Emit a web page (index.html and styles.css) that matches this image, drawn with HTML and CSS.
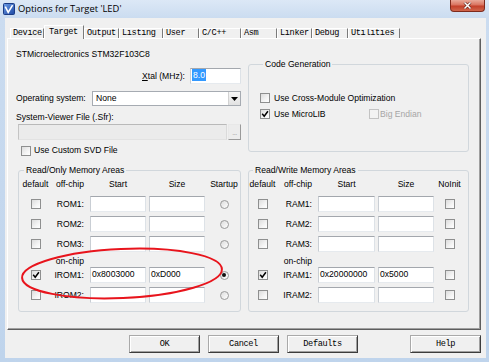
FILE: index.html
```html
<!DOCTYPE html>
<html>
<head>
<meta charset="utf-8">
<title>Options for Target 'LED'</title>
<link rel="stylesheet" href="styles.css">
</head>
<body>
<div class="window">
  <div class="titlebar">
    <svg class="app-icon" viewBox="0 0 12 12" width="12" height="12">
      <defs>
        <linearGradient id="ig" x1="0" y1="0" x2="1" y2="1">
          <stop offset="0" stop-color="#6d9de6"/>
          <stop offset="1" stop-color="#1c47a3"/>
        </linearGradient>
      </defs>
      <rect x="0.5" y="0.5" width="11" height="11" rx="1" fill="url(#ig)" stroke="#1b3c85"/>
      <path d="M2.3 3.6 L5.2 9.4 L9.6 2.2" stroke="#fff" stroke-width="1.6" fill="none"/>
    </svg>
    <span class="title">Options for Target 'LED'</span>
    <div class="close-btn">
      <svg width="9" height="7" viewBox="0 0 9 7"><path d="M1.5 0.5 L7.5 6.5 M7.5 0.5 L1.5 6.5" stroke="#5a1a10" stroke-width="2.6"/><path d="M1.5 0.5 L7.5 6.5 M7.5 0.5 L1.5 6.5" stroke="#fff" stroke-width="1.5"/></svg>
    </div>
  </div>

  <div class="client">
    <div class="tabs">
      <div class="tab">Device</div>
      <div class="tab active">Target</div>
      <div class="tab">Output</div>
      <div class="tab">Listing</div>
      <div class="tab">User</div>
      <div class="tab">C/C++</div>
      <div class="tab">Asm</div>
      <div class="tab">Linker</div>
      <div class="tab">Debug</div>
      <div class="tab">Utilities</div>
    </div>

    <div class="panel">
      <div class="top">
        <div class="left-col">
          <div class="line device">STMicroelectronics STM32F103C8</div>
          <div class="xtal-row">
            <span class="line"><u>X</u>tal (MHz):</span>
            <div class="textbox xtal"><span class="selected">8.0</span></div>
          </div>
          <div class="os-row">
            <span class="line os-label">Operating system:</span>
            <div class="combo">
              <span class="combo-text">None</span>
              <span class="combo-btn"><svg width="7" height="4" viewBox="0 0 7 4"><path d="M0 0H7L3.5 4Z" fill="#000"/></svg></span>
            </div>
          </div>
          <div class="line svf-label">System-Viewer File (.Sfr):</div>
          <div class="svf-row">
            <div class="textbox disabled"></div>
            <div class="browse">...</div>
          </div>
          <div class="check-row">
            <span class="cb"></span>
            <span class="line">Use Custom SVD File</span>
          </div>
        </div>

        <fieldset class="group codegen">
          <legend>Code Generation</legend>
          <div class="cg-row">
            <span class="cb"></span>
            <span class="line">Use Cross-Module Optimization</span>
          </div>
          <div class="cg-row second">
            <span class="cg-item">
              <span class="cb"><svg viewBox="0 0 8 8" width="8" height="8"><path d="M1.2 3.8 L3.2 6.2 L6.9 1.2" stroke="#000" stroke-width="1.5" fill="none"/></svg></span>
              <span class="line">Use MicroLIB</span>
            </span>
            <span class="cb disabled"></span>
            <span class="line muted">Big Endian</span>
          </div>
        </fieldset>
      </div>

      <div class="mem">
        <fieldset class="group ro">
          <legend>Read/Only Memory Areas</legend>
          <div class="mem-grid ro-grid">
            <span class="h">default</span><span class="h r">off-chip</span><span class="h">Start</span><span class="h">Size</span><span class="h">Startup</span>

            <span class="cc"><span class="cb"></span></span><span class="lbl">ROM1:</span><span class="textbox"></span><span class="textbox"></span><span class="cc"><span class="radio"></span></span>
            <span class="cc"><span class="cb"></span></span><span class="lbl">ROM2:</span><span class="textbox"></span><span class="textbox"></span><span class="cc"><span class="radio"></span></span>
            <span class="cc"><span class="cb"></span></span><span class="lbl">ROM3:</span><span class="textbox"></span><span class="textbox"></span><span class="cc"><span class="radio"></span></span>

            <span></span><span class="onchip">on-chip</span><span></span><span></span><span></span>

            <span class="cc"><span class="cb"><svg viewBox="0 0 8 8" width="8" height="8"><path d="M1.2 3.8 L3.2 6.2 L6.9 1.2" stroke="#000" stroke-width="1.5" fill="none"/></svg></span></span><span class="lbl">IROM1:</span><span class="textbox">0x8003000</span><span class="textbox">0xD000</span><span class="cc"><span class="radio on"></span></span>
            <span class="cc"><span class="cb"></span></span><span class="lbl">IROM2:</span><span class="textbox"></span><span class="textbox"></span><span class="cc"><span class="radio"></span></span>
          </div>
        </fieldset>

        <fieldset class="group rw">
          <legend>Read/Write Memory Areas</legend>
          <div class="mem-grid rw-grid">
            <span class="h">default</span><span class="h r">off-chip</span><span class="h">Start</span><span class="h">Size</span><span class="h">NoInit</span>

            <span class="cc"><span class="cb"></span></span><span class="lbl">RAM1:</span><span class="textbox"></span><span class="textbox"></span><span class="cc"><span class="cb"></span></span>
            <span class="cc"><span class="cb"></span></span><span class="lbl">RAM2:</span><span class="textbox"></span><span class="textbox"></span><span class="cc"><span class="cb"></span></span>
            <span class="cc"><span class="cb"></span></span><span class="lbl">RAM3:</span><span class="textbox"></span><span class="textbox"></span><span class="cc"><span class="cb"></span></span>

            <span></span><span class="onchip">on-chip</span><span></span><span></span><span></span>

            <span class="cc"><span class="cb"><svg viewBox="0 0 8 8" width="8" height="8"><path d="M1.2 3.8 L3.2 6.2 L6.9 1.2" stroke="#000" stroke-width="1.5" fill="none"/></svg></span></span><span class="lbl">IRAM1:</span><span class="textbox">0x20000000</span><span class="textbox">0x5000</span><span class="cc"><span class="cb"></span></span>
            <span class="cc"><span class="cb"></span></span><span class="lbl">IRAM2:</span><span class="textbox"></span><span class="textbox"></span><span class="cc"><span class="cb"></span></span>
          </div>
        </fieldset>
      </div>
    </div>

    <div class="buttons">
      <div class="btn">OK</div>
      <div class="btn">Cancel</div>
      <div class="btn">Defaults</div>
      <div class="btn help">Help</div>
    </div>
  </div>

  <svg class="annotation" width="489" height="362" viewBox="0 0 489 362">
    <ellipse cx="122" cy="273.5" rx="100" ry="24.5" transform="rotate(-2.5 122 273.5)" fill="none" stroke="#e8141c" stroke-width="2"/>
  </svg>
</div>
</body>
</html>
```

FILE: styles.css
```css
* { box-sizing: border-box; }
html, body { margin: 0; padding: 0; }
body {
  width: 489px;
  height: 362px;
  overflow: hidden;
  font-family: "Liberation Sans", Arial, sans-serif;
  font-size: 8.6px;
  color: #000;
}

.window {
  position: relative;
  width: 489px;
  height: 362px;
  display: flex;
  flex-direction: column;
  background: linear-gradient(180deg, #dce8f6 0px, #cbdcf0 18px, #bfd4ec 362px);
}

/* title bar */
.titlebar {
  flex: none;
  height: 18px;
  display: flex;
  align-items: flex-start;
}
.app-icon { margin: 3px 0 0 3px; flex: none; }
.title {
  margin: 2px 0 0 3px;
  font-family: "Open Sans", "Liberation Sans", sans-serif;
  font-size: 9.4px;
  line-height: 13px;
  color: #000;
}
.close-btn {
  margin-left: auto;
  margin-right: 4px;
  width: 35px;
  height: 12px;
  border: 1px solid #7e2a1c;
  border-top: none;
  border-radius: 0 0 4px 4px;
  background: linear-gradient(180deg, #e9a999 0%, #d9735f 45%, #c3402a 55%, #d0664c 100%);
  display: flex;
  align-items: center;
  justify-content: center;
}

/* client */
.client {
  flex: 1;
  margin: 0 3px 4px 5px;
  padding-left: 2px;
  background: #f0f0f0;
  display: flex;
  flex-direction: column;
}

/* tabs */
.tabs {
  height: 20px;
  padding-left: 3px;
  display: grid;
  grid-template-columns: 34px 40px 35px 44px 36px 42px 36px 35px 36px 52px;
  align-items: end;
  font-family: "Liberation Mono", "Courier New", monospace;
  font-size: 8.6px;
  letter-spacing: -0.35px;
}
.tab {
  height: 10px;
  line-height: 9px;
  padding-left: 2px;
  border-left: 1px solid #fff;
  border-top: 1px solid #fff;
  border-right: 1px solid #7a7a7a;
  white-space: nowrap;
  overflow: hidden;
}
.tab.active {
  position: relative;
  z-index: 1;
  height: 14px;
  margin-bottom: -1px;
  line-height: 12px;
  padding-left: 4px;
  background: #f0f0f0;
}

/* panel */
.panel {
  width: 474px;
  height: 292px;
  flex: none;
  border-top: 1px solid #fff;
  border-left: 1px solid #fff;
  border-right: 1px solid #5e5e5e;
  border-bottom: 1px solid #5e5e5e;
  box-shadow: inset -1px -1px 0 #a0a0a0;
  padding: 10px 0 0 8px;
}

.line { line-height: 11px; white-space: nowrap; }

.top {
  display: grid;
  grid-template-columns: 225px 221px;
  column-gap: 7px;
  align-items: start;
}
.left-col { display: flex; flex-direction: column; }
.device { height: 11px; }

.xtal-row {
  margin-top: 8px;
  height: 16px;
  display: flex;
  justify-content: flex-end;
  align-items: center;
  gap: 5px;
}
.textbox {
  display: block;
  height: 16px;
  background: #fff;
  border: 1px solid;
  border-color: #a3a7ad #dde2e7 #e6eaee #c9ced4;
  padding: 0 2px;
  line-height: 12px;
  white-space: nowrap;
  overflow: hidden;
}
.textbox.xtal { width: 51px; padding-left: 1px; }
.selected {
  display: inline-block;
  background: #3399ff;
  color: #fff;
  line-height: 12px;
  padding: 0 1px;
}

.os-row {
  margin-top: 7px;
  height: 15px;
  display: flex;
  align-items: center;
}
.os-label { width: 76px; }
.combo {
  width: 149px;
  height: 15px;
  display: flex;
  background: #fff;
  border: 1px solid #a6abb2;
}
.combo-text { flex: 1; padding-left: 3px; line-height: 13px; }
.combo-btn {
  width: 12px;
  display: flex;
  align-items: center;
  justify-content: center;
  background: linear-gradient(180deg, #f6f6f6, #e2e2e2);
  border-left: 1px solid #d2d2d2;
}

.svf-label { margin-top: 6px; }
.svf-row {
  margin-top: 1px;
  height: 16px;
  display: flex;
  padding-left: 2px;
}
.textbox.disabled {
  width: 209px;
  background: #ebebeb;
  border-color: #b9b9b9 #dadada #e2e2e2 #c4c4c4;
}
.browse {
  width: 13px;
  height: 16px;
  margin-left: 1px;
  border: 1px solid;
  border-color: #e8e8e8 #9a9a9a #9a9a9a #e8e8e8;
  background: #ececec;
  color: #9a9a9a;
  font-size: 7px;
  line-height: 16px;
  text-align: center;
  letter-spacing: -0.5px;
}

.check-row {
  margin-top: 5px;
  height: 11px;
  display: flex;
  align-items: center;
  gap: 3px;
  padding-left: 5px;
}

/* checkboxes and radios */
.cb {
  flex: none;
  width: 10px;
  height: 10px;
  border: 1px solid #8e8f8f;
  background: linear-gradient(135deg, #dcdcdc 0%, #f4f4f4 60%, #fff 100%);
  display: flex;
  align-items: center;
  justify-content: center;
}
.cb.disabled {
  border-color: #c3c3c3;
  background: #f3f3f3;
}
.radio {
  flex: none;
  width: 9px;
  height: 9px;
  border-radius: 50%;
  border: 1px solid #9a9a9a;
  background: linear-gradient(135deg, #dcdcdc, #fff);
  display: flex;
  align-items: center;
  justify-content: center;
}
.radio.on::after {
  content: "";
  width: 4px;
  height: 4px;
  border-radius: 50%;
  background: #111;
}

/* group boxes */
fieldset.group {
  margin: 0;
  padding: 0;
  min-width: 0;
  border: 1px solid #d1d7dc;
  border-radius: 3px;
}
fieldset.group legend {
  padding: 0 2px;
  line-height: 12px;
  white-space: nowrap;
}

fieldset.group.codegen {
  margin-top: 9px;
  padding: 22px 0 31px 11px;
}
fieldset.group.codegen legend { margin-left: 3px; }
.cg-row {
  height: 12px;
  display: flex;
  align-items: center;
  gap: 4px;
}
.cg-row.second { margin-top: 4px; gap: 0; }
.cg-item {
  width: 109px;
  display: flex;
  align-items: center;
  gap: 4px;
}
.cg-row.second .cb.disabled { margin-right: 1px; }
.muted { color: #a6a6a6; }

/* memory areas */
.mem {
  margin-top: 8px;
  display: grid;
  grid-template-columns: 225px 221px;
  column-gap: 7px;
}
fieldset.group.ro { margin-left: 2px; width: 223px; padding: 2px 0 8px; }
fieldset.group.ro legend { margin-left: 5px; }
fieldset.group.rw { width: 221px; padding: 2px 0 8px; }
fieldset.group.rw legend { margin-left: 4px; }

.mem-grid {
  display: grid;
  column-gap: 3px;
  grid-template-rows: 18px 20px 20px 20px 11px 20px 16px;
  align-items: start;
}
.ro-grid { grid-template-columns: 33px 32px 56px 56px 32px; }
.rw-grid { grid-template-columns: 27px 36px 57px 56px 25px; }

.h { line-height: 12px; text-align: center; white-space: nowrap; }
.h.r { text-align: right; padding-right: 3px; }
.cc {
  height: 16px;
  display: flex;
  align-items: center;
  justify-content: center;
}
.lbl {
  height: 16px;
  display: flex;
  align-items: center;
  justify-content: flex-end;
  padding-right: 3px;
  white-space: nowrap;
}
.onchip {
  line-height: 11px;
  text-align: right;
  padding-right: 3px;
  white-space: nowrap;
}
.mem-grid .textbox { padding-left: 1px; }

/* buttons */
.buttons {
  margin-top: 5px;
  height: 18px;
  display: flex;
  gap: 8px;
  padding-left: 122px;
}
.btn {
  width: 71px;
  height: 18px;
  border: 1px solid;
  border-color: #a9a9a9 #3c3c3c #3c3c3c #a9a9a9;
  box-shadow: inset 1px 1px 0 #fff, inset -1px -1px 0 #a0a0a0;
  background: #f0f0f0;
  font-family: "Liberation Mono", "Courier New", monospace;
  font-size: 8.6px;
  letter-spacing: -0.35px;
  line-height: 16px;
  text-align: center;
}
.btn.help { margin-left: 44px; }

/* annotation overlay */
.annotation {
  position: absolute;
  left: 0;
  top: 0;
  pointer-events: none;
}
```
